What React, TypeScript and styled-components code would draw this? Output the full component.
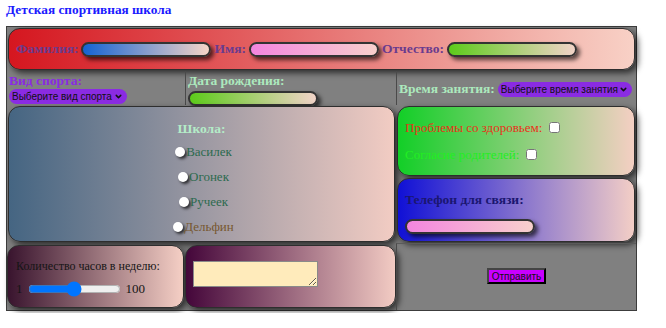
import React from "react";
import styled, { createGlobalStyle } from "styled-components";
import { ChevronDown } from "lucide-react";

const GlobalStyle = createGlobalStyle`
  body {
    margin: 0;
    padding: 2px 6px;
    background: #fff;
    font-family: "Liberation Serif", "Times New Roman", serif;
  }
`;

const Title = styled.h1`
  margin: 0 0 8px;
  height: 16px;
  font-size: 13.3px;
  line-height: 16px;
  font-weight: bold;
  color: #1a1aff;
`;

const Board = styled.div`
  box-sizing: border-box;
  width: 631px;
  display: grid;
  grid-template-columns: 178px 211px 240px;
  grid-template-rows: 44px 34px 72px 66px 67px;
  background: #808080;
  border: 1px solid #3c3c3c;
`;

const Card = styled.div<{ $area: string; $from: string; $to: string }>`
  grid-area: ${(p) => p.$area};
  margin: 1px;
  border: 1px solid #2e2e2e;
  border-radius: 12px;
  background: linear-gradient(to right, ${(p) => p.$from}, ${(p) => p.$to});
  box-shadow: 3px 3px 6px rgba(0, 0, 0, 0.65);
`;

const NameRow = styled(Card)`
  display: flex;
  align-items: center;
  gap: 3px;
  padding-left: 7px;
`;

const Plain = styled.div<{ $area: string; $line?: boolean }>`
  grid-area: ${(p) => p.$area};
  border-left: ${(p) => (p.$line ? "1px solid #4a4a4a" : "none")};
  padding: 0 2px;
`;

const InlineCell = styled(Plain)`
  display: flex;
  align-items: center;
  gap: 3px;
  padding: 2px 2px 0;
`;

const Label = styled.span<{ $color: string }>`
  font-size: 13.5px;
  font-weight: bold;
  color: ${(p) => p.$color};
  white-space: nowrap;
`;

const BlockLabel = styled(Label)`
  display: block;
  line-height: 15px;
  margin: 2px 0 1px;
`;

const Pill = styled.input<{ $from: string; $to: string }>`
  box-sizing: border-box;
  width: 130px;
  height: 15px;
  margin: 0;
  border: 2px solid #333;
  border-radius: 10px;
  background: linear-gradient(to right, ${(p) => p.$from}, ${(p) => p.$to});
  box-shadow: 3px 3px 4px rgba(0, 0, 0, 0.65);
  outline: none;
`;

const SelectWrap = styled.div<{ $w: number }>`
  position: relative;
  width: ${(p) => p.$w}px;
  height: 15px;
  color: #111;
`;

const Select = styled.select`
  appearance: none;
  display: block;
  width: 100%;
  height: 15px;
  padding: 0 12px 0 3px;
  border: none;
  border-radius: 8px;
  background: #8a2be2;
  color: #111;
  font-family: "Liberation Sans", Arial, sans-serif;
  font-size: 10px;
  line-height: 15px;
  outline: none;
`;

const Arrow = styled(ChevronDown)`
  position: absolute;
  right: 4px;
  top: 3px;
  pointer-events: none;
`;

const School = styled(Card)`
  display: flex;
  flex-direction: column;
  align-items: center;
  padding-top: 14px;
`;

const SchoolTitle = styled(Label)`
  margin-bottom: 2px;
`;

const RadioLine = styled.label<{ $color: string }>`
  display: flex;
  align-items: center;
  height: 25px;
  padding-left: 4px;
  font-size: 13px;
  color: ${(p) => p.$color};
`;

const Radio = styled.input`
  appearance: none;
  width: 10px;
  height: 10px;
  margin: 0 1px 0 0;
  border-radius: 50%;
  background: #fff;
  box-shadow: 2px 2px 3px rgba(0, 0, 0, 0.7);
`;

const Health = styled(Card)`
  display: flex;
  flex-direction: column;
  justify-content: center;
  gap: 11px;
  padding-left: 7px;
`;

const CheckLine = styled.label<{ $color: string }>`
  display: flex;
  align-items: center;
  gap: 7px;
  font-size: 13px;
  color: ${(p) => p.$color};
`;

const Check = styled.input`
  width: 11px;
  height: 11px;
  margin: 0;
`;

const Phone = styled(Card)`
  display: flex;
  flex-direction: column;
  gap: 11px;
  padding: 13px 0 0 7px;
`;

const Hours = styled(Card)`
  margin: 2px 1px 2px 0;
  padding: 13px 0 0 8px;
  font-size: 12px;
  color: #151515;
`;

const SliderRow = styled.div`
  display: flex;
  align-items: center;
  gap: 5px;
  margin-top: 7px;
  font-size: 13px;
`;

const Range = styled.input`
  width: 93px;
  margin: 0;
`;

const NoteCard = styled(Card)`
  margin: 2px 0;
  padding: 15px 0 0 7px;
`;

const Note = styled.textarea`
  box-sizing: border-box;
  width: 125px;
  height: 26px;
  margin: 0;
  border: 1px solid #8a8a8a;
  background: #ffebbb;
  resize: both;
`;

const SubmitCell = styled.div`
  grid-area: 5 / 3 / 6 / 4;
  display: flex;
  align-items: center;
  justify-content: center;
  border-left: 1px solid #4a4a4a;
  border-top: 1px solid #5a5a5a;
  padding-bottom: 2px;
`;

const Submit = styled.button`
  height: 16px;
  padding: 0 3px;
  border: 2px outset #444;
  background: #c800ff;
  color: #111;
  font-family: "Liberation Sans", Arial, sans-serif;
  font-size: 10px;
  line-height: 11px;
`;

const schools = [
  { name: "Василек", color: "#2c6a4e" },
  { name: "Огонек", color: "#2c6a4e" },
  { name: "Ручеек", color: "#2c6a4e" },
  { name: "Дельфин", color: "#77572f" },
];

function Picker({ width, text }: { width: number; text: string }) {
  return (
    <SelectWrap $w={width}>
      <Select>
        <option>{text}</option>
      </Select>
      <Arrow size={9} strokeWidth={4} />
    </SelectWrap>
  );
}

export default function App() {
  return (
    <>
      <GlobalStyle />
      <Title>Детская спортивная школа</Title>
      <Board>
        <NameRow $area="1 / 1 / 2 / 4" $from="#d5161f" $to="#f8d1c6">
          <Label $color="#6a3b8e">Фамилия:</Label>
          <Pill $from="#1463d2" $to="#f6d5c8" />
          <Label $color="#6a3b8e">Имя:</Label>
          <Pill $from="#f385df" $to="#f8d0cc" />
          <Label $color="#6a3b8e">Отчество:</Label>
          <Pill $from="#5ccb1a" $to="#f1d3c8" />
        </NameRow>

        <Plain $area="2 / 1 / 3 / 2">
          <BlockLabel $color="#8a2be2">Вид спорта:</BlockLabel>
          <Picker width={118} text="Выберите вид спорта" />
        </Plain>
        <Plain $area="2 / 2 / 3 / 3" $line>
          <BlockLabel $color="#ace9bd">Дата рождения:</BlockLabel>
          <Pill $from="#5ccb1a" $to="#f1d3c8" />
        </Plain>
        <InlineCell $area="2 / 3 / 3 / 4" $line>
          <Label $color="#ace9bd">Время занятия:</Label>
          <Picker width={134} text="Выберите время занятия" />
        </InlineCell>

        <School $area="3 / 1 / 5 / 3" $from="#456582" $to="#f2ccc3">
          <SchoolTitle $color="#b4ecc8">Школа:</SchoolTitle>
          {schools.map((s) => (
            <RadioLine key={s.name} $color={s.color}>
              <Radio type="radio" name="school" />
              {s.name}
            </RadioLine>
          ))}
        </School>

        <Health $area="3 / 3 / 4 / 4" $from="#12cf27" $to="#f4cfc3">
          <CheckLine $color="#e8321a">
            Проблемы со здоровьем:
            <Check type="checkbox" />
          </CheckLine>
          <CheckLine $color="#22ee22">
            Согласие родителей:
            <Check type="checkbox" />
          </CheckLine>
        </Health>

        <Phone $area="4 / 3 / 5 / 4" $from="#1010d6" $to="#f3cec6">
          <Label $color="#1a1670">Телефон для связи:</Label>
          <Pill $from="#f385df" $to="#f8d0cc" />
        </Phone>

        <Hours $area="5 / 1 / 6 / 2" $from="#39142e" $to="#f5cfc5">
          Количество часов в неделю:
          <SliderRow>
            1
            <Range type="range" min={1} max={100} defaultValue={50} />
            100
          </SliderRow>
        </Hours>

        <NoteCard $area="5 / 2 / 6 / 3" $from="#44063a" $to="#f2cbc3">
          <Note />
        </NoteCard>

        <SubmitCell>
          <Submit>Отправить</Submit>
        </SubmitCell>
      </Board>
    </>
  );
}
